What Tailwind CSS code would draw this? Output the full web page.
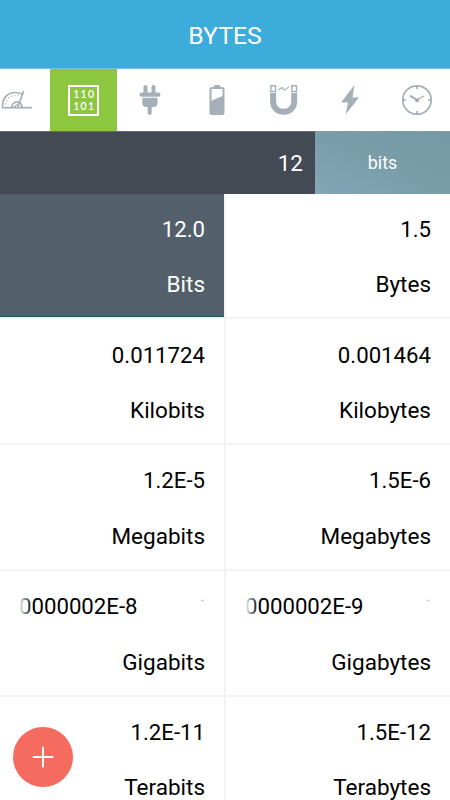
<!DOCTYPE html>
<html lang="en">
 <head>
  <meta charset="UTF-8" />
  <meta name="viewport" content="width=device-width, initial-scale=1.0" />
  <script src="https://cdn.jsdelivr.net/npm/@tailwindcss/browser@4"></script>
  <title>Bytes</title>
 </head>
 <body class="font-[Roboto,sans-serif] bg-white h-[800px] w-[450px] overflow-hidden relative flex flex-col">
  <header class="h-[69px] shrink-0 bg-[#3cacda] border-b border-[#72c3e4] flex items-center justify-center pt-[3px]">
   <h1 class="text-[24.800px] leading-7 text-white">BYTES</h1>
  </header>

  <!-- Category tabs -->
  <nav class="h-[62px] shrink-0 flex text-[#a5afb7] -ml-[17px] w-[467px]">
   <button class="w-[67px] shrink-0 flex items-center justify-center">
    <svg width="32" height="32" viewBox="0 0 32 32" fill="none" stroke="currentColor" stroke-width="1.7">
     <path d="M1 23.7H31" />
     <path d="M1.5 23C1 15 6 8.5 14 8.5C17 8.5 19 9 21 10" />
     <path d="M22.7 7L17 22" />
     <path d="M11 23C11 16.500 20.500 16.500 21 23" />
     <path d="M14 23C14.500 21 17 20.500 18 22.500" />
     <path d="M4.500 20.500C5 14 10 10.800 18 11.600" stroke-width="1.500" stroke-dasharray="1 2.500" />
    </svg>
   </button>
   <button class="w-[66.500px] shrink-0 flex items-center justify-center bg-[#8dc63f]">
    <span class="w-[31px] h-[31px] border-2 border-white flex flex-col items-center justify-center text-white text-[10.500px] leading-[12.500px] tracking-[1.200px] font-[Lato,sans-serif] font-semibold pl-[2px]">
     <span>110</span>
     <span>101</span>
    </span>
   </button>
   <button class="w-[66.700px] shrink-0 flex items-center justify-center">
    <svg width="32" height="32" viewBox="0 0 32 32" fill="currentColor">
     <rect x="9.500" y="1" width="4" height="10" rx="2" />
     <rect x="17.500" y="1" width="4" height="10" rx="2" />
     <rect x="5.500" y="8.500" width="21" height="4.200" rx="2" />
     <path d="M8.300 13.700H23.500V19Q23.500 23 19.500 23H12.300Q8.300 23 8.300 19Z" />
     <path d="M13.700 22H17.700V29Q17.700 31 15.700 31Q13.700 31 13.700 29Z" />
    </svg>
   </button>
   <button class="w-[66.700px] shrink-0 flex items-center justify-center">
    <svg width="32" height="32" viewBox="0 0 32 32">
     <rect x="13" y="1" width="6" height="4" rx="1" fill="currentColor" />
     <rect x="8.500" y="3" width="15" height="28" rx="2.500" fill="currentColor" />
     <path d="M10.500 5H21.500V12L10.500 16.700Z" fill="white" />
    </svg>
   </button>
   <button class="w-[66.700px] shrink-0 flex items-center justify-center">
    <svg width="32" height="32" viewBox="0 0 32 32" fill="none" stroke="currentColor">
     <path d="M3.800 1.800H8.500V7.500H3.800Z" stroke-width="1.400" />
     <path d="M24.800 1.800H29.500V7.500H24.800Z" stroke-width="1.400" />
     <path d="M6.100 9V17.500C6.100 31.300 27.200 31.300 27.200 17.500V9" stroke-width="6" />
     <path d="M11 6L15 3L17.500 6L22 2.500L18 6.500L15 4.200Z" fill="currentColor" stroke-width="0.800" />
    </svg>
   </button>
   <button class="w-[66.700px] shrink-0 flex items-center justify-center">
    <svg width="32" height="32" viewBox="0 0 32 32" fill="currentColor">
     <path d="M20.500 1L7 18.500H14L11.500 30.500L25 13.500H18.500Z" />
    </svg>
   </button>
   <button class="w-[66.700px] shrink-0 flex items-center justify-center">
    <svg width="32" height="32" viewBox="0 0 32 32" fill="none" stroke="currentColor" stroke-width="1.700">
     <circle cx="16" cy="16" r="14.200" />
     <path d="M16 2V5M16 27V30M2 16H5M27 16H30" />
     <path d="M9 11.600L16 16" stroke-width="2" />
     <path d="M16 16L23 12" stroke-width="1.300" />
     <circle cx="16" cy="16.200" r="1.200" fill="currentColor" />
    </svg>
   </button>
  </nav>

  <!-- Input value and unit -->
  <div class="h-[62.500px] shrink-0 flex text-white">
   <div class="w-[315px] bg-[#444a54] border-t border-[#656b72] flex items-center justify-end pr-3 pt-[3px] text-[22.500px]">12</div>
   <div class="flex-1 bg-linear-to-tr from-[#84a5b6] via-[#7a9daa] to-[#7598a5] border-t border-[#819ca3] flex items-center justify-center pt-px text-[17.800px]">bits</div>
  </div>

  <!-- Conversions -->
  <main class="grid grid-cols-2 gap-[2px] auto-rows-[123.800px] bg-[#f3f3f3] text-[22.200px] leading-7 text-black text-right">
   <div class="bg-[#535f6a] text-white border-b border-[#254b60] pr-[19px] pt-[21.300px]">
    <p>12.0</p>
    <p class="mt-[27px] text-[22.500px]">Bits</p>
   </div>
   <div class="bg-white pr-[19px] pt-[21.300px]">
    <p>1.5</p>
    <p class="mt-[27px] text-[22.500px]">Bytes</p>
   </div>
   <div class="bg-white pr-[19px] pt-[21.300px]">
    <p>0.011724</p>
    <p class="mt-[27.500px] text-[22.500px]">Kilobits</p>
   </div>
   <div class="bg-white pr-[19px] pt-[21.300px]">
    <p>0.001464</p>
    <p class="mt-[27.500px] text-[22.500px]">Kilobytes</p>
   </div>
   <div class="bg-white pr-[19px] pt-[21.300px]">
    <p>1.2E-5</p>
    <p class="mt-[27.500px] text-[22.500px]">Megabits</p>
   </div>
   <div class="bg-white pr-[19px] pt-[21.300px]">
    <p>1.5E-6</p>
    <p class="mt-[27.500px] text-[22.500px]">Megabytes</p>
   </div>
   <div class="bg-white pr-[19px] pt-[21.300px]">
    <div class="relative ml-[19px] overflow-hidden text-left">
     <p>0000002E-8</p>
     <span class="absolute inset-y-0 left-0 w-[13px] bg-linear-to-r from-white to-transparent"></span>
     <span class="absolute top-[8px] right-[1px] w-[3px] h-[1px] bg-[#b5b5b5] -rotate-25"></span>
    </div>
    <p class="mt-[27.500px] text-[22.500px]">Gigabits</p>
   </div>
   <div class="bg-white pr-[19px] pt-[21.300px]">
    <div class="relative ml-[19px] overflow-hidden text-left">
     <p>0000002E-9</p>
     <span class="absolute inset-y-0 left-0 w-[13px] bg-linear-to-r from-white to-transparent"></span>
     <span class="absolute top-[8px] right-[1px] w-[3px] h-[1px] bg-[#b5b5b5] -rotate-25"></span>
    </div>
    <p class="mt-[27.500px] text-[22.500px]">Gigabytes</p>
   </div>
   <div class="bg-white pr-[19px] pt-[21.300px]">
    <p>1.2E-11</p>
    <p class="mt-[27.500px] text-[22.500px]">Terabits</p>
   </div>
   <div class="bg-white pr-[19px] pt-[21.300px]">
    <p>1.5E-12</p>
    <p class="mt-[27.500px] text-[22.500px]">Terabytes</p>
   </div>
  </main>

  <button class="absolute left-[12.500px] top-[727.300px] w-[60px] h-[60px] rounded-full bg-[#f66b60] flex items-center justify-center">
   <svg width="22" height="22" viewBox="0 0 22 22" fill="none" stroke="white" stroke-width="2" stroke-linecap="round">
    <path d="M11 1.500V20.500M1.500 11H20.500" />
   </svg>
  </button>
 </body>
</html>
